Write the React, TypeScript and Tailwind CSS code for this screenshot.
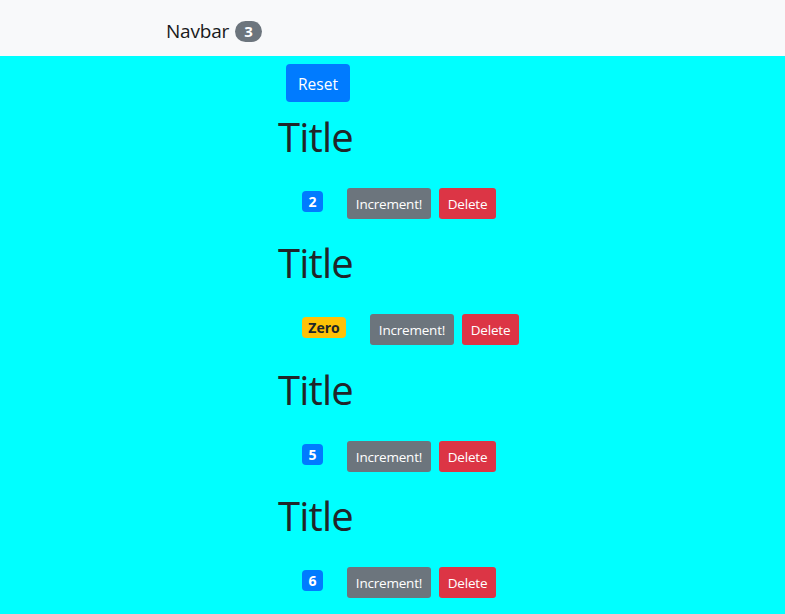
import React from "react";

const counters = [
  { id: 1, value: 2 },
  { id: 2, value: 0 },
  { id: 3, value: 5 },
  { id: 4, value: 6 },
];

function Counter({ value }: { value: number }) {
  const zero = value === 0;
  return (
    <div className="pb-[17.33px]">
      <h1 className="h-12 pt-[3px] text-[40px] leading-[48px] tracking-[-0.8px] font-normal text-[#212529]">
        Title
      </h1>
      <div className="flex items-start pt-[30px] pl-[24px]">
        <span
          className={
            "mt-[3px] h-[21px] rounded-[4px] text-center text-[14px] leading-[21px] font-bold " +
            (zero ? "w-[44px] bg-[#ffc107] text-[#212529]" : "w-[21px] bg-[#007bff] text-white")
          }
        >
          {zero ? "Zero" : value}
        </span>
        <button className="ml-[24px] h-[31px] w-[84px] pt-[1px] rounded-[3px] bg-[#6c757d] text-white text-[13.5px] tracking-[-0.2px] leading-[30px]">
          Increment!
        </button>
        <button className="ml-[8px] h-[31px] w-[57px] pt-[1px] rounded-[3px] bg-[#dc3545] text-white text-[13.5px] tracking-[-0.2px] leading-[30px]">
          Delete
        </button>
      </div>
    </div>
  );
}

export default function App() {
  return (
    <div className="min-h-[614px] bg-[#00ffff] font-['Open_Sans',sans-serif]">
      <nav className="h-14 bg-[#f8f9fa] flex items-center pl-[166px] pt-[6px]">
        <span className="text-[19px] tracking-[-0.2px] text-[#1a1a1a]">Navbar</span>
        <span className="ml-[6px] h-[21px] w-[27px] text-center rounded-full bg-[#6c757d] text-white text-[15px] leading-[21px] font-bold">
          3
        </span>
      </nav>
      <main className="pl-[278px]">
        <button className="ml-2 mt-2 h-[38px] w-16 pt-[3px] rounded-[4px] bg-[#007bff] text-white text-[15.5px]">
          Reset
        </button>
        <div className="mt-2">
          {counters.map((c) => (
            <Counter key={c.id} value={c.value} />
          ))}
        </div>
      </main>
    </div>
  );
}
